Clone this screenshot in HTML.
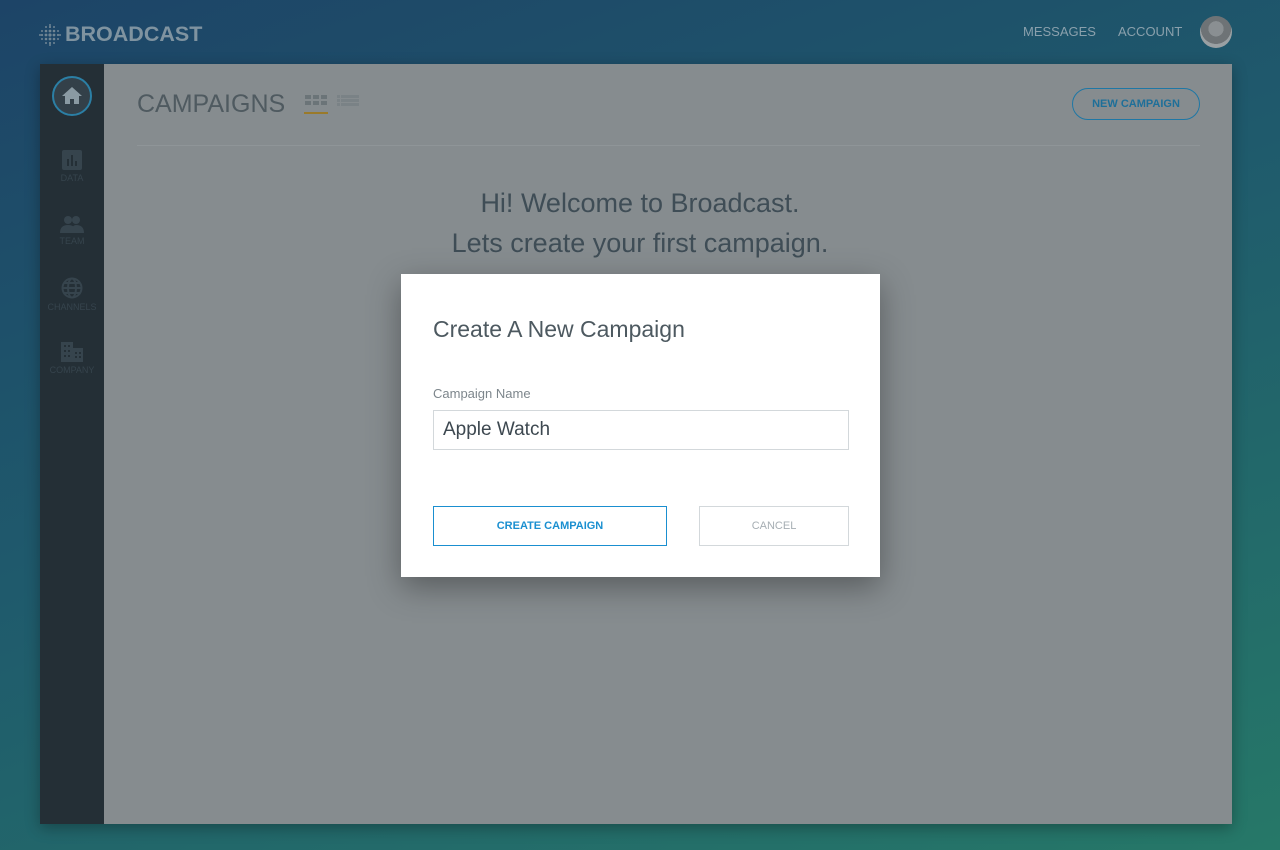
<!DOCTYPE html>
<html><head><meta charset="utf-8"><style>
*{margin:0;padding:0;box-sizing:border-box}
body{width:1280px;height:850px;overflow:hidden;font-family:"Liberation Sans",sans-serif;background:linear-gradient(160deg,#1d4467 0%,#1f5a6c 45%,#267868 100%);position:relative}
.logo{position:absolute;left:38px;top:22px;display:flex;align-items:center;color:#7f93a0;font-weight:bold;font-size:21.5px;letter-spacing:0}
.nav{position:absolute;top:24px;color:#8aa0ac;font-size:13px}
.av{position:absolute;left:1200px;top:16px;width:32px;height:32px;border-radius:50%;background:radial-gradient(circle at 50% 40%,#8a8f92 0 30%,#6e7376 31% 60%,#9aa0a3 61%)}
.app{position:absolute;left:40px;top:64px;width:1192px;height:760px;background:#868c8f;box-shadow:0 4px 14px rgba(0,0,0,.3)}
.side{position:absolute;left:0;top:0;width:64px;height:760px;background:#242f36}
.home{position:absolute;left:12px;top:12px;width:40px;height:40px;border-radius:50%;border:2px solid #2b7fa5;background:#334049}
.si{position:absolute;left:0;width:64px;text-align:center;color:#36444d;font-size:9px}
.si svg{display:block;margin:0 auto 3px}
h1{position:absolute;left:97px;top:26px;font-weight:normal;font-size:25px;color:#4f5a60}
.line{position:absolute;left:97px;right:32px;top:81px;border-top:1px solid #8f9598}
.btnnew{position:absolute;left:1032px;top:24px;width:128px;height:32px;border:1px solid #1e77a5;border-radius:16px;color:#1e6f99;font-size:11px;font-weight:bold;text-align:center;line-height:30px}
.wel{position:absolute;left:8px;right:0;text-align:center;color:#3f4d56;font-size:27px;line-height:34px}
.modal{position:absolute;left:401px;top:274px;width:479px;height:303px;background:#fff;box-shadow:0 10px 30px rgba(0,0,0,.35)}
</style></head><body>
<div class="logo"><svg width="24" height="24" viewBox="0 0 24 24" style="margin-right:3px">
<g fill="#6f8594">
<circle cx="12" cy="2" r="1"/><circle cx="12" cy="22" r="1"/><circle cx="2" cy="12" r="1"/><circle cx="22" cy="12" r="1"/>
<circle cx="8" cy="4" r="1"/><circle cx="16" cy="4" r="1"/><circle cx="8" cy="20" r="1"/><circle cx="16" cy="20" r="1"/>
<circle cx="4" cy="8" r="1"/><circle cx="20" cy="8" r="1"/><circle cx="4" cy="16" r="1"/><circle cx="20" cy="16" r="1"/>
<circle cx="8" cy="8" r="1.3"/><circle cx="12" cy="8" r="1.4"/><circle cx="16" cy="8" r="1.3"/>
<circle cx="8" cy="12" r="1.4"/><circle cx="12" cy="12" r="1.6"/><circle cx="16" cy="12" r="1.4"/>
<circle cx="8" cy="16" r="1.3"/><circle cx="12" cy="16" r="1.4"/><circle cx="16" cy="16" r="1.3"/>
<circle cx="12" cy="4" r="1.1"/><circle cx="12" cy="20" r="1.1"/><circle cx="4" cy="12" r="1.1"/><circle cx="20" cy="12" r="1.1"/>
</g></svg>BROADCAST</div>
<div class="nav" style="left:1023px">MESSAGES</div>
<div class="nav" style="left:1118px">ACCOUNT</div>
<div class="av"></div>
<div class="app">
 <div class="side">
  <div class="home"><svg width="36" height="36" viewBox="0 0 36 36"><path d="M18 9 L8 18 H11 V26 H16 V21 H20 V26 H25 V18 H28 Z" fill="#8a9aa3"/></svg></div>
  <div class="si" style="top:86px"><svg width="20" height="20" viewBox="0 0 20 20"><rect x="0" y="0" width="20" height="20" rx="2" fill="#36444d"/><rect x="5" y="9" width="2" height="7" fill="#242f36"/><rect x="9" y="5" width="2" height="11" fill="#242f36"/><rect x="13" y="11" width="2" height="5" fill="#242f36"/></svg>DATA</div>
  <div class="si" style="top:151px"><svg width="24" height="18" viewBox="0 0 24 18"><circle cx="8" cy="5" r="4" fill="#36444d"/><circle cx="16" cy="5" r="4" fill="#36444d"/><path d="M0 18 Q0 10 8 10 Q16 10 16 18Z M10 18 Q12 10 16 10 Q24 10 24 18Z" fill="#36444d"/></svg>TEAM</div>
  <div class="si" style="top:213px"><svg width="22" height="22" viewBox="0 0 22 22" fill="none" stroke="#36444d" stroke-width="2"><circle cx="11" cy="11" r="9.5"/><ellipse cx="11" cy="11" rx="4" ry="9.5"/><path d="M1.5 11H20.5M3 6H19M3 16H19"/></svg>CHANNELS</div>
  <div class="si" style="top:278px"><svg width="22" height="20" viewBox="0 0 22 20"><path d="M0 0H12V6H22V20H0Z" fill="#36444d"/><g fill="#242f36"><rect x="3" y="3" width="2" height="2"/><rect x="7" y="3" width="2" height="2"/><rect x="3" y="8" width="2" height="2"/><rect x="7" y="8" width="2" height="2"/><rect x="3" y="13" width="2" height="2"/><rect x="7" y="13" width="2" height="2"/><rect x="14" y="10" width="2" height="2"/><rect x="18" y="10" width="2" height="2"/><rect x="14" y="14" width="2" height="2"/><rect x="18" y="14" width="2" height="2"/></g></svg>COMPANY</div>
 </div>
 <h1>CAMPAIGNS</h1>
 <svg style="position:absolute;left:264px;top:30px" width="60" height="22" viewBox="0 0 60 22"><g fill="#6b7478"><rect x="1" y="1" width="6" height="4"/><rect x="9" y="1" width="6" height="4"/><rect x="17" y="1" width="6" height="4"/><rect x="1" y="7" width="6" height="4"/><rect x="9" y="7" width="6" height="4"/><rect x="17" y="7" width="6" height="4"/></g><rect x="0" y="18" width="24" height="2" fill="#9a7a2a"/><g fill="#7a8286"><rect x="33" y="1" width="3" height="3"/><rect x="37" y="1" width="18" height="3"/><rect x="33" y="5" width="3" height="3"/><rect x="37" y="5" width="18" height="3"/><rect x="33" y="9" width="3" height="3"/><rect x="37" y="9" width="18" height="3"/></g></svg>
 <div class="btnnew">NEW CAMPAIGN</div>
 <div class="line"></div>
 <div class="wel" style="top:122px">Hi! Welcome to Broadcast.</div>
 <div class="wel" style="top:162px">Lets create your first campaign.</div>
</div>
<div class="modal">
 <div style="position:absolute;left:32px;top:42px;font-size:23px;color:#4d5960">Create A New Campaign</div>
 <div style="position:absolute;left:32px;top:112px;font-size:13px;color:#7d868c">Campaign Name</div>
 <div style="position:absolute;left:32px;top:136px;width:416px;height:40px;border:1px solid #d3d8db;padding-left:9px;line-height:38px;font-size:19px;color:#3d4850">Apple Watch</div>
 <div style="position:absolute;left:32px;top:232px;width:234px;height:40px;border:1px solid #1a8fd0;color:#1a8fd0;font-size:11px;font-weight:bold;text-align:center;line-height:38px">CREATE CAMPAIGN</div>
 <div style="position:absolute;left:298px;top:232px;width:150px;height:40px;border:1px solid #d3d8db;color:#a6aeb3;font-size:11px;text-align:center;line-height:38px">CANCEL</div>
</div>
</body></html>
